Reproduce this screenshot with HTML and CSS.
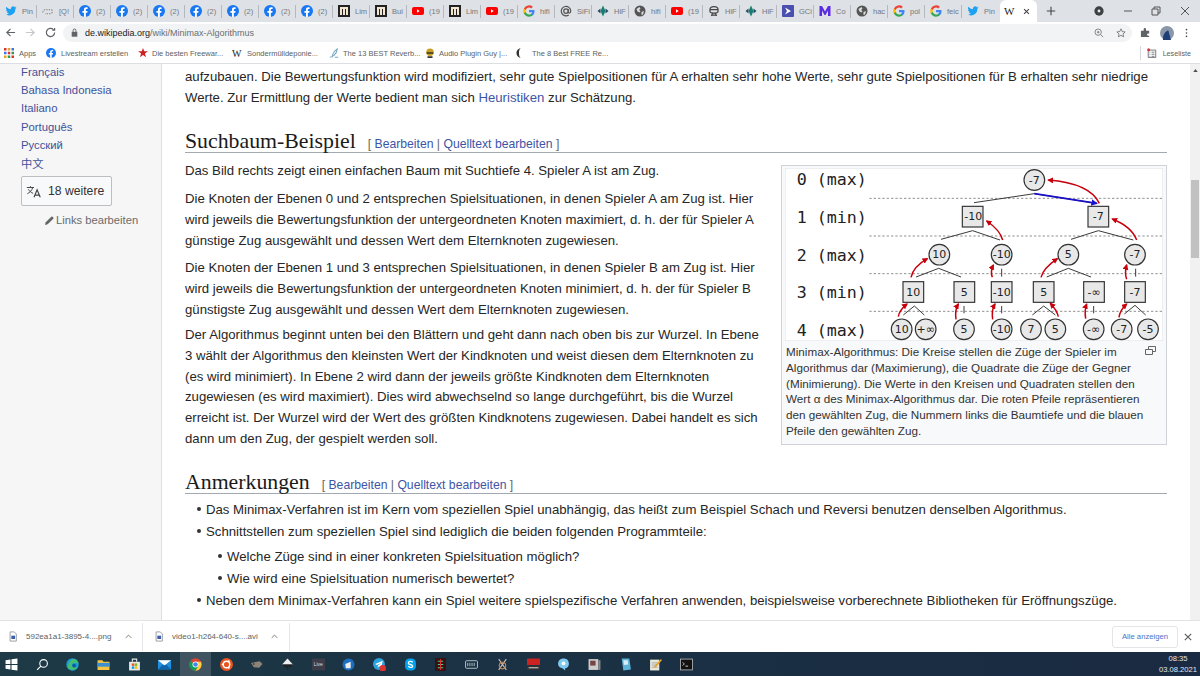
FILE: index.html
```html
<!DOCTYPE html>
<html lang="de">
<head>
<meta charset="utf-8">
<title>Minimax-Algorithmus</title>
<link rel="stylesheet" href="styles.css">
</head>
<body>
<svg class="defs" width="0" height="0">
  <symbol id="tw" viewBox="0 0 24 24"><path fill="#1da1f2" d="M23 5a9 9 0 0 1-2.6.7 4.500 4.500 0 0 0 2-2.500 9 9 0 0 1-2.900 1.100 4.500 4.500 0 0 0-7.700 4.100A12.800 12.800 0 0 1 2.500 3.700a4.500 4.500 0 0 0 1.400 6 4.500 4.500 0 0 1-2-.6 4.500 4.500 0 0 0 3.600 4.500 4.500 4.500 0 0 1-2 .1 4.500 4.500 0 0 0 4.200 3.100A9 9 0 0 1 1 18.700 12.800 12.800 0 0 0 20.700 7.300 9 9 0 0 0 23 5z"/></symbol>
  <symbol id="fb" viewBox="0 0 24 24"><circle cx="12" cy="12" r="12" fill="#1877f2"/><path fill="#fff" d="M16.500 15.500l.6-3.500h-3.400V9.700c0-1 .5-1.900 2-1.900h1.500v-3s-1.400-.2-2.700-.2c-2.800 0-4.600 1.700-4.600 4.700V12H6.800v3.500h3.100V24h3.800v-8.500z"/></symbol>
  <symbol id="li" viewBox="0 0 24 24"><rect width="24" height="24" fill="#222"/><path fill="#f2e6d0" d="M4 4h16v16h-4V8h-2v12h-4V8H8v12H4z"/></symbol>
  <symbol id="yt" viewBox="0 0 24 24"><rect y="4" width="24" height="16" rx="4" fill="#f00"/><path fill="#fff" d="M10 8.500l5.500 3.500-5.500 3.500z"/></symbol>
  <symbol id="gg" viewBox="0 0 24 24"><path fill="#4285f4" d="M23 12.300c0-.8-.1-1.600-.2-2.300H12v4.400h6.200a5.300 5.300 0 0 1-2.300 3.400v2.900h3.700c2.100-2 3.400-4.900 3.400-8.400z"/><path fill="#34a853" d="M12 23.500c3.100 0 5.700-1 7.600-2.800l-3.700-2.900c-1 .7-2.300 1.100-3.900 1.100-3 0-5.500-2-6.400-4.700H1.800v3A11.500 11.500 0 0 0 12 23.500z"/><path fill="#fbbc05" d="M5.600 14.200a6.900 6.900 0 0 1 0-4.400v-3H1.800a11.500 11.500 0 0 0 0 10.400z"/><path fill="#ea4335" d="M12 5.100c1.700 0 3.200.6 4.400 1.700l3.300-3.300A11.500 11.500 0 0 0 1.800 6.800l3.800 3C6.500 7.100 9 5.100 12 5.100z"/></symbol>
  <symbol id="at" viewBox="0 0 24 24"><circle cx="12" cy="12" r="4.500" fill="none" stroke="#555" stroke-width="2.500"/><path fill="none" stroke="#555" stroke-width="2.500" d="M16.500 8v6c0 3 5 3 5-2a9.500 9.500 0 1 0-4 8"/></symbol>
  <symbol id="di" viewBox="0 0 24 24"><path fill="#16806f" d="M12 1l5 11-5 11-5-11z"/><path fill="#2a4a66" d="M1 12l6-5v10zM23 12l-6-5v10z"/></symbol>
  <symbol id="gl" viewBox="0 0 24 24"><circle cx="12" cy="12" r="11" fill="#555"/><path fill="#ddd" d="M5 8l6-4 2 3-3 3 3 2-2 3-4-2zM15 14l5-2-2 7-3 1z"/></symbol>
  <symbol id="ro" viewBox="0 0 24 24"><path fill="none" stroke="#444" stroke-width="2.500" d="M4 9c0-8 16-8 16 0v4c0 3-3 3-8 3s-8 0-8-3zM4 9h16M7 20h10M9 16l-2 6M15 16l2 6"/></symbol>
  <symbol id="gc" viewBox="0 0 24 24"><rect width="24" height="24" rx="2" fill="#4a4fb0"/><path fill="#fff" d="M6 5l12 7-12 7 4-7z"/></symbol>
  <symbol id="mm" viewBox="0 0 24 24"><path fill="#5b2be0" d="M1 22V2h5l6 11 6-11h5v20h-5V11l-5 9h-2l-5-9v11z"/></symbol>
  <symbol id="cl" viewBox="0 0 24 24"><path fill="none" stroke="#999" stroke-width="2.500" stroke-dasharray="3 2" d="M2 15a5 5 0 0 1 5-6h10a4 4 0 0 1 0 8H6"/></symbol>
  <symbol id="fi" viewBox="0 0 24 24"><path fill="#fff" stroke="#8a9099" stroke-width="2" d="M5 1h10l5 5v17H5z"/><rect x="8" y="10" width="9" height="8" fill="#3b5fa8"/></symbol>
  <symbol id="win" viewBox="0 0 24 24"><path fill="#fff" d="M1 4l9-1.300V11H1zM12 2.400L23 1v10H12zM1 13h9v8.300L1 20zM12 13h11v10l-11-1.500z"/></symbol>
  <symbol id="sea" viewBox="0 0 24 24"><circle cx="14" cy="10" r="7" fill="none" stroke="#fff" stroke-width="2"/><path stroke="#fff" stroke-width="2" d="M9 15l-7 7"/></symbol>
  <symbol id="edge" viewBox="0 0 24 24"><circle cx="12" cy="12" r="11.500" fill="#1a9bd7"/><path fill="#4fc94f" d="M3 17c4 6 13 8 19-1-5 3-11 2-11-3 0-4 6-6 12-2 0-3-2-8-8-9C10 2 4 8 3 17z" opacity=".75"/><circle cx="15" cy="14" r="3.500" fill="#0f5a9c"/></symbol>
  <symbol id="fol" viewBox="0 0 24 24"><path fill="#f5c542" d="M1 4h9l2 3h11v15H1z"/><rect x="1" y="9" width="22" height="7" fill="#3a8fd0"/></symbol>
  <symbol id="sto" viewBox="0 0 24 24"><path fill="#e8e8e8" d="M2 7h20v16H2z"/><path fill="none" stroke="#e8e8e8" stroke-width="2" d="M8 7V2h8v5"/><rect x="7" y="10" width="4.500" height="4.500" fill="#f25022"/><rect x="12.500" y="10" width="4.500" height="4.500" fill="#7fba00"/><rect x="7" y="15.500" width="4.500" height="4.500" fill="#00a4ef"/><rect x="12.500" y="15.500" width="4.500" height="4.500" fill="#ffb900"/></symbol>
  <symbol id="mai" viewBox="0 0 24 24"><rect y="4" width="24" height="17" fill="#1f8fdc"/><path fill="#fff" d="M0 4h24L12 14z"/><path fill="#0f65ad" d="M0 21l9-9 3 2 3-2 9 9z"/></symbol>
  <symbol id="chr" viewBox="0 0 24 24"><circle cx="12" cy="12" r="11.500" fill="#db4437"/><path fill="#0f9d58" d="M12 12L2 6v0A11.500 11.500 0 0 0 12 23.500l5-8z"/><path fill="#ffcd40" d="M12 7h10a11.500 11.500 0 0 1-10 16.500l5-8z"/><circle cx="12" cy="12" r="5.500" fill="#fff"/><circle cx="12" cy="12" r="4.200" fill="#4285f4"/></symbol>
  <symbol id="ubu" viewBox="0 0 24 24"><circle cx="12" cy="12" r="12" fill="#e95420"/><circle cx="12" cy="12" r="6" fill="none" stroke="#fff" stroke-width="2.500"/><circle cx="5" cy="12" r="2" fill="#fff"/><circle cx="16" cy="6" r="2" fill="#fff"/><circle cx="16" cy="18" r="2" fill="#fff"/></symbol>
  <symbol id="mol" viewBox="0 0 24 24"><path fill="#8c8478" d="M2 9l16-3 5 5-6 7-10-1z"/><circle cx="7" cy="11" r="1.500" fill="#222"/></symbol>
  <symbol id="ink" viewBox="0 0 24 24"><path fill="#eee" d="M12 1l10 11H2z"/><path fill="#222" d="M2 12h20l-6 6-2-2-2 6-2-6-2 2z"/></symbol>
  <symbol id="liv" viewBox="0 0 24 24"><rect y="1" width="24" height="22" fill="#3c3c4a"/></symbol>
  <symbol id="blu" viewBox="0 0 24 24"><circle cx="12" cy="12" r="11" fill="#1b6fc2"/><path fill="#eee" d="M6 11l10-4v12H7z"/></symbol>
  <symbol id="tel" viewBox="0 0 24 24"><circle cx="11" cy="11" r="11" fill="#2aa3de"/><path fill="#fff" d="M4 11l14-6-3 13-4-3-2 3v-4l6-5-8 4z"/><circle cx="18" cy="19" r="6" fill="#d33"/></symbol>
  <symbol id="sky" viewBox="0 0 24 24"><rect x="2" y="1" width="20" height="22" rx="8" fill="#00a2ed"/><path fill="none" stroke="#fff" stroke-width="2.500" d="M16 8c-2-3-8-2-8 1 0 4 8 2 8 6 0 3-6 3-8 0"/></symbol>
  <symbol id="mat" viewBox="0 0 24 24"><rect x="2" width="20" height="24" fill="#3a1010"/><path stroke="#2d9" stroke-width="2" d="M7 6h10M7 12h10M7 18h10"/><path stroke="#d33" stroke-width="2" d="M12 2v20"/></symbol>
  <symbol id="kal" viewBox="0 0 24 24"><rect x="1" y="5" width="22" height="14" rx="2" fill="none" stroke="#cdd" stroke-width="1.500"/><path stroke="#cdd" stroke-width="1.500" d="M5 9v6M9 9v6M13 9v6M17 9v6"/></symbol>
  <symbol id="xx" viewBox="0 0 24 24"><path stroke="#cbb" stroke-width="2" fill="none" d="M5 2l14 20M19 2L5 22"/><circle cx="12" cy="14" r="6" fill="none" stroke="#b85" stroke-width="2"/></symbol>
  <symbol id="voi" viewBox="0 0 24 24"><rect y="1" width="24" height="12" fill="#c22"/><rect y="14" width="24" height="8" fill="#333"/><path stroke="#ccc" stroke-width="2" d="M3 18h18"/></symbol>
  <symbol id="pus" viewBox="0 0 24 24"><path fill="#7fc8ee" d="M12 1c7 0 10 4 10 10 0 5-4 8-7 8v4l-5-4c-5-1-8-4-8-8C2 5 6 1 12 1z"/><circle cx="12" cy="10" r="3.500" fill="#fff"/></symbol>
  <symbol id="boo" viewBox="0 0 24 24"><rect x="1" y="2" width="18" height="20" fill="#ccc"/><rect x="4" y="5" width="10" height="9" fill="#744"/><rect x="19" y="4" width="4" height="18" fill="#888"/></symbol>
  <symbol id="nbk" viewBox="0 0 24 24"><path fill="#5fb2d8" d="M5 1h14l3 20-14 2z"/><path fill="#d7eef8" d="M8 4h8l1 8-8 1z"/></symbol>
  <symbol id="npd" viewBox="0 0 24 24"><rect x="2" y="3" width="17" height="20" fill="#e8e8d8"/><path stroke="#99a" stroke-width="1.500" d="M5 9h11M5 13h11M5 17h11"/><path fill="#e8a020" d="M22 2l2 2-11 12-4 2 2-4z"/></symbol>
  <symbol id="trm" viewBox="0 0 24 24"><rect x="1" y="2" width="22" height="20" fill="#111" stroke="#bbb" stroke-width="1.500"/><path stroke="#eee" stroke-width="1.500" fill="none" d="M5 8l3 3-3 3M10 15h5"/></symbol>
</svg>

<div class="screen">
  <div class="tabs">
    <div class="tab"><svg class="tab-ic"><use href="#tw"/></svg><span>Pin</span></div>
    <div class="tab"><svg class="tab-ic"><use href="#cl"/></svg><span>[Q!</span></div>
    <div class="tab"><svg class="tab-ic"><use href="#fb"/></svg><span>(2)</span></div>
    <div class="tab"><svg class="tab-ic"><use href="#fb"/></svg><span>(2)</span></div>
    <div class="tab"><svg class="tab-ic"><use href="#fb"/></svg><span>(2)</span></div>
    <div class="tab"><svg class="tab-ic"><use href="#fb"/></svg><span>(2)</span></div>
    <div class="tab"><svg class="tab-ic"><use href="#fb"/></svg><span>(2)</span></div>
    <div class="tab"><svg class="tab-ic"><use href="#fb"/></svg><span>(2)</span></div>
    <div class="tab"><svg class="tab-ic"><use href="#fb"/></svg><span>(2)</span></div>
    <div class="tab"><svg class="tab-ic"><use href="#li"/></svg><span>Lim</span></div>
    <div class="tab"><svg class="tab-ic"><use href="#li"/></svg><span>Bui</span></div>
    <div class="tab"><svg class="tab-ic"><use href="#yt"/></svg><span>(19</span></div>
    <div class="tab"><svg class="tab-ic"><use href="#li"/></svg><span>Lim</span></div>
    <div class="tab"><svg class="tab-ic"><use href="#yt"/></svg><span>(19</span></div>
    <div class="tab"><svg class="tab-ic"><use href="#gg"/></svg><span>hifi</span></div>
    <div class="tab"><svg class="tab-ic"><use href="#at"/></svg><span>SiFi</span></div>
    <div class="tab"><svg class="tab-ic"><use href="#di"/></svg><span>HiF</span></div>
    <div class="tab"><svg class="tab-ic"><use href="#gl"/></svg><span>hifi</span></div>
    <div class="tab"><svg class="tab-ic"><use href="#yt"/></svg><span>(19</span></div>
    <div class="tab"><svg class="tab-ic"><use href="#ro"/></svg><span>HiF</span></div>
    <div class="tab"><svg class="tab-ic"><use href="#di"/></svg><span>HiF</span></div>
    <div class="tab"><svg class="tab-ic"><use href="#gc"/></svg><span>GCi</span></div>
    <div class="tab"><svg class="tab-ic"><use href="#mm"/></svg><span>Co</span></div>
    <div class="tab"><svg class="tab-ic"><use href="#gl"/></svg><span>hac</span></div>
    <div class="tab"><svg class="tab-ic"><use href="#gg"/></svg><span>pol</span></div>
    <div class="tab"><svg class="tab-ic"><use href="#gg"/></svg><span>feic</span></div>
    <div class="tab tab-last"><svg class="tab-ic"><use href="#tw"/></svg><span>Pin</span></div>
    <div class="tab-active"><span class="w-logo">W</span><svg class="tab-x" viewBox="0 0 10 10"><path d="M1.500 1.500l7 7M8.500 1.500l-7 7"/></svg></div>
    <svg class="new-tab" viewBox="0 0 12 12"><path d="M6 1v10M1 6h10"/></svg>
    <div class="win-controls">
      <svg class="rec" viewBox="0 0 14 14"><circle cx="7" cy="7" r="6.500" fill="#3c4043"/><circle cx="7" cy="7" r="2" fill="#e8e8e8"/></svg>
      <svg class="wc wc-min" viewBox="0 0 10 10"><path d="M1 5h8"/></svg>
      <svg class="wc wc-max" viewBox="0 0 10 10"><path d="M1 3h6v6H1zM3 3V1h6v6H7"/></svg>
      <svg class="wc wc-close" viewBox="0 0 10 10"><path d="M1 1l8 8M9 1l-8 8"/></svg>
    </div>
  </div>

  <div class="toolbar">
    <svg class="nav" viewBox="0 0 12 12"><path d="M11 6H2M6 2L2 6l4 4"/></svg>
    <svg class="nav nav-off" viewBox="0 0 12 12"><path d="M1 6h9M6 2l4 4-4 4"/></svg>
    <svg class="nav" viewBox="0 0 12 12"><path d="M10.500 6a4.500 4.500 0 1 1-1.300-3.200M10.500 1v2.500H8"/></svg>
    <div class="omnibox">
      <svg class="lock" viewBox="0 0 10 12"><path fill="#5f6368" d="M1 5h8v7H1z"/><path fill="none" stroke="#5f6368" stroke-width="1.400" d="M3 5V3a2 2 0 0 1 4 0v2"/></svg>
      <span class="url"><b>de.wikipedia.org</b>/wiki/Minimax-Algorithmus</span>
      <svg class="omni-ic omni-zoom" viewBox="0 0 12 12"><circle cx="5" cy="5" r="3.800"/><path d="M8 8l3 3M3.500 5h3M5 3.500v3"/></svg>
      <svg class="omni-ic omni-star" viewBox="0 0 12 12"><path d="M6 1l1.500 3.300 3.500.4-2.600 2.400.7 3.500L6 8.800l-3.100 1.800.7-3.500L1 4.700l3.500-.4z"/></svg>
    </div>
    <svg class="ext" viewBox="0 0 12 12"><path fill="#5f6368" d="M1 4h3V2.500a1.300 1.300 0 0 1 2.600 0V4H10v3h-1a1.300 1.300 0 0 0 0 2.600h1V11H1z"/></svg>
    <svg class="avatar" viewBox="0 0 14 14"><circle cx="7" cy="7" r="7" fill="#8a97a8"/><path fill="#1f3f78" d="M3 14c0-5 1-7 4-9 1-1 2 0 2 2l2 7z"/></svg>
    <svg class="menu-dots" viewBox="0 0 4 12"><circle cx="2" cy="1.500" r="1.100"/><circle cx="2" cy="6" r="1.100"/><circle cx="2" cy="10.500" r="1.100"/></svg>
  </div>

  <div class="bookmarks">
    <div class="bm bm-apps"><svg class="bm-ic" viewBox="0 0 12 12"><g fill="#d33"><rect x="0" y="0" width="3" height="3"/><rect x="4.500" y="0" width="3" height="3" fill="#e8a020"/><rect x="9" y="0" width="3" height="3" fill="#3b78e7"/><rect x="0" y="4.500" width="3" height="3" fill="#3b78e7"/><rect x="4.500" y="4.500" width="3" height="3"/><rect x="9" y="4.500" width="3" height="3" fill="#2a9d50"/><rect x="0" y="9" width="3" height="3" fill="#e8a020"/><rect x="4.500" y="9" width="3" height="3" fill="#2a9d50"/><rect x="9" y="9" width="3" height="3"/></g></svg><span>Apps</span></div>
    <div class="bm bm-live"><svg class="bm-ic"><use href="#fb"/></svg><span>Livestream erstellen</span></div>
    <div class="bm bm-free"><svg class="bm-ic" viewBox="0 0 12 12"><path fill="#c22" d="M6 0l1.500 4H12L8.300 6.600 9.700 11 6 8.300 2.300 11l1.400-4.400L0 4h4.500z"/></svg><span>Die besten Freewar...</span></div>
    <div class="bm bm-sond"><span class="bm-w">W</span><span>Sondermülldeponie...</span></div>
    <div class="bm bm-rev"><svg class="bm-ic" viewBox="0 0 12 12"><path fill="none" stroke="#7aa8c8" stroke-width="1.300" d="M1 11c3 0 8-3 9-10-3 2-6 5-6 10M7 11h4"/></svg><span>The 13 BEST Reverb...</span></div>
    <div class="bm bm-plug"><svg class="bm-ic" viewBox="0 0 12 12"><circle cx="6" cy="5" r="4.500" fill="#c9a020"/><path fill="#333" d="M2 5h8v2H2zM3 10h6v2H3z"/></svg><span>Audio Plugin Guy |...</span></div>
    <div class="bm bm-best"><svg class="bm-ic" viewBox="0 0 12 12"><path fill="#333" d="M8 0C4 1 3 4 3 6s1 5 5 6c-2-2-2-4-2-6s0-4 2-6z"/></svg><span>The 8 Best FREE Re...</span></div>
    <div class="leseliste"><svg class="bm-ic" viewBox="0 0 12 12"><path fill="none" stroke="#5f6368" d="M1.500 2.500h9v9h-9zM3 5h1M5.500 5H9M3 7.500h1M5.500 7.500H9M3 10h1M5.500 10H9"/><circle cx="2" cy="2" r="1.800" fill="#d33"/></svg><span>Leseliste</span></div>
  </div>

  <div class="page">
    <nav class="sidebar">
      <a class="lang">Français</a>
      <a class="lang">Bahasa Indonesia</a>
      <a class="lang">Italiano</a>
      <a class="lang">Português</a>
      <a class="lang">Русский</a>
      <a class="lang lang-cjk">中文</a>
      <div class="more-langs">
        <svg class="translate" viewBox="0 0 18 14"><path fill="none" stroke="#444" stroke-width="1.100" d="M1 2.500h8M5 1v1.500M7.500 2.500C7 5.500 4.500 8 1.500 9.500M2.800 4.500C4 7 6 8.500 8 9"/><path fill="none" stroke="#444" stroke-width="1.300" d="M9 13.500L12.500 5l3.500 8.500M10.200 11h4.600"/></svg>
        <span>18 weitere</span>
      </div>
      <div class="edit-links">
        <svg class="pencil" viewBox="0 0 10 10"><path fill="#666" d="M0 10l.8-3L7 .8a1 1 0 0 1 1.400 0l.8.8a1 1 0 0 1 0 1.400L3 9.200z"/></svg>
        <span>Links bearbeiten</span>
      </div>
    </nav>
    <main class="content">
      <p class="intro">aufzubauen. Die Bewertungsfunktion wird modifiziert, sehr gute Spielpositionen für A erhalten sehr hohe Werte, sehr gute Spielpositionen für B erhalten sehr niedrige Werte. Zur Ermittlung der Werte bedient man sich <a>Heuristiken</a> zur Schätzung.</p>
      <h2 class="h2-first">Suchbaum-Beispiel<span class="editsec">[ <a>Bearbeiten</a> | <a>Quelltext bearbeiten</a> ]</span></h2>
      <figure class="thumb">
        <svg class="tree" viewBox="15 24 1134 519" width="378" height="173">
          <defs>
            <marker id="ar" viewBox="0 0 10 10" refX="8" refY="5" markerWidth="4" markerHeight="4" markerUnits="strokeWidth" orient="auto"><path d="M0 0l10 5-10 5z" fill="#c8000c"/></marker>
            <marker id="ab" viewBox="0 0 10 10" refX="8" refY="5" markerWidth="4" markerHeight="4" markerUnits="strokeWidth" orient="auto"><path d="M0 0l10 5-10 5z" fill="#1a10c8"/></marker>
          </defs>
          <rect class="frame" x="15" y="24" width="1134" height="519"/>
          <g class="dash"><path d="M268 115H1149M268 228H1149M268 341H1149M268 454H1149"/></g>
          <g class="lv">
            <text x="50" y="76">0 (max)</text><text x="50" y="189">1 (min)</text><text x="50" y="302">2 (max)</text><text x="50" y="415">3 (min)</text><text x="50" y="528">4 (max)</text>
          </g>
          <g class="edge">
            <path d="M763 101L582 128M763 101L950 130M578 212L483 238M578 212L660 240M955 212L873 238M955 212L1060 240M476 325L408 351M476 325L543 351M665 326V350M865 325L800 351M865 325L933 351M1067 326V350M403 438L370 465M403 438L433 465M552 438V460M665 438V460M791 438L757 465M791 438L826 465M941 438V460M1065 436L1033 462M1065 436L1097 465"/>
          </g>
          <path class="blue" d="M763 101L950 130" marker-end="url(#ab)"/>
          <g class="nodes">
            <circle cx="763" cy="60" r="31"/>
            <rect x="547" y="139" width="62" height="62"/><rect x="924" y="139" width="62" height="62"/>
            <circle cx="478" cy="284" r="31"/><circle cx="665" cy="284" r="31"/><circle cx="865" cy="284" r="31"/><circle cx="1065" cy="284" r="31"/>
            <rect x="369" y="365" width="62" height="62"/><rect x="522" y="365" width="62" height="62"/><rect x="634" y="365" width="62" height="62"/><rect x="760" y="365" width="62" height="62"/><rect x="911" y="365" width="62" height="62"/><rect x="1034" y="365" width="62" height="62"/>
            <circle cx="365" cy="508" r="31"/><circle cx="437" cy="508" r="31"/><circle cx="552" cy="508" r="31"/><circle cx="665" cy="508" r="31"/><circle cx="753" cy="508" r="31"/><circle cx="826" cy="508" r="31"/><circle cx="941" cy="508" r="31"/><circle cx="1025" cy="508" r="31"/><circle cx="1104" cy="508" r="31"/>
          </g>
          <g class="val">
            <text x="763" y="71">-7</text>
            <text x="580" y="181">-10</text><text x="955" y="181">-7</text>
            <text x="478" y="295">10</text><text x="665" y="295">-10</text><text x="865" y="295">5</text><text x="1065" y="295">-7</text>
            <text x="400" y="407">10</text><text x="553" y="407">5</text><text x="665" y="407">-10</text><text x="791" y="407">5</text><text x="942" y="407">-∞</text><text x="1065" y="407">-7</text>
            <text x="365" y="519">10</text><text x="437" y="519">+∞</text><text x="552" y="519">5</text><text x="665" y="519">-10</text><text x="753" y="519">7</text><text x="826" y="519">5</text><text x="941" y="519">-∞</text><text x="1025" y="519">-7</text><text x="1104" y="519">-5</text>
          </g>
          <g class="red">
            <path marker-end="url(#ar)" d="M958 130Q930 70 805 60"/>
            <path marker-end="url(#ar)" d="M1070 240Q1055 200 997 177"/>
            <path marker-end="url(#ar)" d="M668 240Q660 210 620 183"/>
            <path marker-end="url(#ar)" d="M393 352Q400 320 442 296"/>
            <path marker-end="url(#ar)" d="M637 352Q630 335 640 315"/>
            <path marker-end="url(#ar)" d="M783 352Q790 325 832 296"/>
            <path marker-end="url(#ar)" d="M1040 358Q1033 340 1040 315"/>
            <path marker-end="url(#ar)" d="M355 470Q358 450 381 432"/>
            <path marker-end="url(#ar)" d="M528 478Q524 450 535 432"/>
            <path marker-end="url(#ar)" d="M638 478Q634 450 645 432"/>
            <path marker-end="url(#ar)" d="M835 470Q830 450 811 430"/>
            <path marker-end="url(#ar)" d="M917 476Q913 450 920 432"/>
            <path marker-end="url(#ar)" d="M1017 472Q1020 450 1040 432"/>
          </g>
        </svg>
        <figcaption>
          <svg class="magnify" viewBox="0 0 11 9"><path fill="none" stroke="#666" d="M3.500 3.500V.5h7v5h-3M.5 3.500h7v5h-7z"/></svg>
          Minimax-Algorithmus: Die Kreise stellen die Züge der Spieler im Algorithmus dar (Maximierung), die Quadrate die Züge der Gegner (Minimierung). Die Werte in den Kreisen und Quadraten stellen den Wert α des Minimax-Algorithmus dar. Die roten Pfeile repräsentieren den gewählten Zug, die Nummern links die Baumtiefe und die blauen Pfeile den gewählten Zug.
        </figcaption>
      </figure>
      <p>Das Bild rechts zeigt einen einfachen Baum mit Suchtiefe 4. Spieler A ist am Zug.</p>
      <p>Die Knoten der Ebenen 0 und 2 entsprechen Spielsituationen, in denen Spieler A am Zug ist. Hier wird jeweils die Bewertungsfunktion der untergeordneten Knoten maximiert, d. h. der für Spieler A günstige Zug ausgewählt und dessen Wert dem Elternknoten zugewiesen.</p>
      <p class="p-tight">Die Knoten der Ebenen 1 und 3 entsprechen Spielsituationen, in denen Spieler B am Zug ist. Hier wird jeweils die Bewertungsfunktion der untergeordneten Knoten minimiert, d. h. der für Spieler B günstigste Zug ausgewählt und dessen Wert dem Elternknoten zugewiesen.</p>
      <p>Der Algorithmus beginnt unten bei den Blättern und geht dann nach oben bis zur Wurzel. In Ebene 3 wählt der Algorithmus den kleinsten Wert der Kindknoten und weist diesen dem Elternknoten zu (es wird minimiert). In Ebene 2 wird dann der jeweils größte Kindknoten dem Elternknoten zugewiesen (es wird maximiert). Dies wird abwechselnd so lange durchgeführt, bis die Wurzel erreicht ist. Der Wurzel wird der Wert des größten Kindknotens zugewiesen. Dabei handelt es sich dann um den Zug, der gespielt werden soll.</p>
      <h2>Anmerkungen<span class="editsec">[ <a>Bearbeiten</a> | <a>Quelltext bearbeiten</a> ]</span></h2>
      <ul>
        <li>Das Minimax-Verfahren ist im Kern vom speziellen Spiel unabhängig, das heißt zum Beispiel Schach und Reversi benutzen denselben Algorithmus.</li>
        <li>Schnittstellen zum speziellen Spiel sind lediglich die beiden folgenden Programmteile:
          <ul>
            <li>Welche Züge sind in einer konkreten Spielsituation möglich?</li>
            <li>Wie wird eine Spielsituation numerisch bewertet?</li>
          </ul>
        </li>
        <li>Neben dem Minimax-Verfahren kann ein Spiel weitere spielspezifische Verfahren anwenden, beispielsweise vorberechnete Bibliotheken für Eröffnungszüge.</li>
      </ul>
    </main>
    <div class="scrollbar">
      <svg class="sb-arrow" viewBox="0 0 6 4"><path d="M3 0l3 4H0z" fill="#505050"/></svg>
      <div class="sb-thumb"></div>
    </div>
  </div>

  <div class="downloads">
    <div class="dl"><svg class="dl-ic"><use href="#fi"/></svg><span class="dl-name">592ea1a1-3895-4....png</span><svg class="chev" viewBox="0 0 10 6"><path d="M1 5l4-4 4 4"/></svg></div>
    <div class="dl"><svg class="dl-ic"><use href="#fi"/></svg><span class="dl-name">video1-h264-640-s....avi</span><svg class="chev" viewBox="0 0 10 6"><path d="M1 5l4-4 4 4"/></svg></div>
    <div class="dl-right">
      <div class="show-all">Alle anzeigen</div>
      <svg class="dl-close" viewBox="0 0 10 10"><path d="M1 1l8 8M9 1l-8 8"/></svg>
    </div>
  </div>

  <div class="taskbar">
    <div class="tb"><svg><use href="#win"/></svg></div>
    <div class="tb"><svg><use href="#sea"/></svg></div>
    <div class="tb"><svg><use href="#edge"/></svg></div>
    <div class="tb"><svg><use href="#fol"/></svg></div>
    <div class="tb"><svg><use href="#sto"/></svg></div>
    <div class="tb"><svg><use href="#mai"/></svg></div>
    <div class="tb tb-on"><svg><use href="#chr"/></svg></div>
    <div class="tb"><svg><use href="#ubu"/></svg></div>
    <div class="tb"><svg><use href="#mol"/></svg></div>
    <div class="tb"><svg><use href="#ink"/></svg></div>
    <div class="tb tb-live"><svg><use href="#liv"/></svg><span>Live</span></div>
    <div class="tb"><svg><use href="#blu"/></svg></div>
    <div class="tb"><svg><use href="#tel"/></svg></div>
    <div class="tb"><svg><use href="#sky"/></svg></div>
    <div class="tb"><svg><use href="#mat"/></svg></div>
    <div class="tb"><svg><use href="#kal"/></svg></div>
    <div class="tb"><svg><use href="#xx"/></svg></div>
    <div class="tb"><svg><use href="#voi"/></svg></div>
    <div class="tb"><svg><use href="#pus"/></svg></div>
    <div class="tb"><svg><use href="#boo"/></svg></div>
    <div class="tb"><svg><use href="#nbk"/></svg></div>
    <div class="tb"><svg><use href="#npd"/></svg></div>
    <div class="tb"><svg><use href="#trm"/></svg></div>
    <div class="clock"><span>08:35</span><span>03.08.2021</span></div>
  </div>
</div>
</body>
</html>
```
FILE: styles.css
```css
* { box-sizing: border-box; }
html, body { margin: 0; padding: 0; height: 100%; overflow: hidden; }
body { font-family: "Liberation Sans", Arial, sans-serif; color: #2b2b2b; background: #fff; }
.defs { position: absolute; }
.screen { width: 1200px; height: 676px; display: flex; flex-direction: column; overflow: hidden; }

/* tab strip */
.tabs { height: 22px; flex: none; background: #dee1e6; display: flex; align-items: center; }
.tab { width: 37px; height: 13px; flex: none; display: flex; align-items: center; gap: 5px; padding-left: 5px; border-right: 1px solid #b5b8bd; font-size: 7.500px; color: #74777c; overflow: hidden; white-space: nowrap; }
.tab-last { border-right: 0; }
.tab-ic { width: 12px; height: 12px; flex: none; }
.tab-active { width: 37px; height: 22px; margin-left: 1px; flex: none; background: #fff; border-radius: 6px 6px 0 0; display: flex; align-items: center; padding-left: 4px; gap: 8px; }
.w-logo { font-family: "Liberation Serif", serif; font-size: 11px; color: #222; width: 11px; }
.tab-x { width: 7px; height: 7px; fill: none; stroke: #444; stroke-width: 1.500; }
.new-tab { width: 10px; height: 10px; margin-left: 9px; fill: none; stroke: #444; stroke-width: 1.300; flex: none; }
.win-controls { margin-left: auto; display: flex; align-items: center; padding-right: 10px; }
.rec { width: 10px; height: 10px; margin-right: 19px; }
.wc { width: 10px; height: 10px; fill: none; stroke: #555; stroke-width: 1; }
.wc-min { margin-right: 18px; }
.wc-max { margin-right: 19px; }

/* toolbar */
.toolbar { height: 21px; flex: none; background: #fff; display: flex; align-items: center; padding-left: 5px; }
.nav { width: 11px; height: 11px; margin-right: 9px; fill: none; stroke: #5f6368; stroke-width: 1.300; flex: none; }
.nav-off { stroke: #c4c7cb; }
.omnibox { width: 1069px; height: 18px; margin-left: -2px; border-radius: 9px; background: #f1f3f4; display: flex; align-items: center; padding-left: 8px; flex: none; }
.lock { width: 7px; height: 9px; flex: none; }
.url { margin-left: 7px; font-size: 9px; color: #6b6e72; white-space: nowrap; }
.url b { font-weight: 400; color: #222; }
.omni-ic { width: 10px; height: 10px; fill: none; stroke: #5f6368; stroke-width: .9; flex: none; }
.omni-zoom { margin-left: auto; }
.omni-star { margin-left: 12px; margin-right: 6px; }
.ext { width: 11px; height: 11px; margin-left: 8px; flex: none; }
.avatar { width: 14px; height: 14px; margin-left: 9px; flex: none; }
.menu-dots { width: 3px; height: 10px; margin-left: 11px; fill: #444; flex: none; }

/* bookmarks */
.bookmarks { height: 21px; flex: none; background: #fff; border-bottom: 1px solid #dcdee1; display: flex; align-items: center; padding-left: 4px; font-size: 7.500px; color: #5c5f63; white-space: nowrap; }
.bm { display: flex; align-items: center; flex: none; }
.bm-ic { width: 10px; height: 10px; flex: none; }
.bm-apps { width: 42px; gap: 5px; }
.bm-live { width: 92px; gap: 5px; }
.bm-free { width: 94px; gap: 4px; }
.bm-sond { width: 97px; gap: 5px; }
.bm-rev { width: 96px; gap: 4px; }
.bm-plug { width: 89px; gap: 4px; }
.bm-best { gap: 8px; }
.bm-w { font-family: "Liberation Serif", serif; font-size: 10px; color: #222; width: 10px; }
.leseliste { margin-left: auto; padding-right: 9px; padding-left: 6px; height: 14px; border-left: 1px solid #d5d7da; display: flex; align-items: center; gap: 6px; font-size: 7.200px; }

/* page */
.page { flex: 1; min-height: 0; display: flex; overflow: hidden; background: #fff; }
.sidebar { width: 162px; flex: none; background: #f6f6f6; border-right: 1px solid #cfe3f3; padding: 0 0 0 21px; font-size: 11.300px; display: flex; flex-direction: column; align-items: flex-start; }
.lang { color: #40529a; height: 18.200px; line-height: 18.200px; white-space: nowrap; }
.lang:first-child { margin-top: -1px; }
.lang-cjk { font-family: "Noto Sans CJK SC", sans-serif; }
.more-langs { margin-top: 4px; width: 91px; height: 30px; border: 1px solid #bcbec2; border-radius: 2px; background: #f8f9fa; display: flex; align-items: center; padding-left: 4px; gap: 6px; font-size: 12.200px; color: #333; }
.translate { width: 16px; height: 13px; flex: none; }
.edit-links { margin: 8px 0 0 24px; display: flex; align-items: center; gap: 2px; font-size: 11.200px; color: #6b6b6b; white-space: nowrap; }
.pencil { width: 9px; height: 9px; flex: none; }

.content { flex: 1; min-width: 0; padding: 3px 23px 0 23px; font-size: 13.200px; line-height: 20.700px; color: #262626; }
.content a { color: #3d55a5; }
.content p { margin: 0 0 7px; }
.content .intro { margin-bottom: 0; }
.content .p-tight { margin-bottom: 5px; }
h2 { height: 26px; margin: 18px 0 6px; padding-top: 2px; font-family: "Liberation Serif", serif; font-weight: 400; font-size: 21.800px; line-height: 25px; color: #1a1a1a; border-bottom: 1px solid #a2a9b1; white-space: nowrap; }
.h2-first { margin-top: 19px; margin-bottom: 8px; }
.editsec { margin-left: 12px; font-family: "Liberation Sans", sans-serif; font-size: 12.200px; color: #666; vertical-align: baseline; }

.thumb { float: right; width: 386px; margin: 3.500px 0 8px 20px; padding: 2px 3px 5px; background: #f8f9fa; border: 1px solid #cfd2d6; }
.tree { display: block; }
.frame { fill: #fff; stroke: #dcdfe3; stroke-width: 3; }
.dash path { stroke: #7a7a7a; stroke-width: 2.500; stroke-dasharray: 7 6; fill: none; }
.lv text { font-family: "DejaVu Sans Mono", monospace; font-size: 50px; fill: #222; }
.edge path { stroke: #3a3a3a; stroke-width: 3; fill: none; }
.blue { stroke: #1a10c8; stroke-width: 5; fill: none; }
.nodes circle, .nodes rect { fill: #e8e8e8; stroke: #333; stroke-width: 3.500; }
.val text { font-family: "DejaVu Sans", sans-serif; font-size: 33px; fill: #222; text-anchor: middle; }
.red path { stroke: #c8000c; stroke-width: 4.500; fill: none; }
figcaption { font-size: 11.700px; line-height: 15.800px; color: #333; padding: 3px 1px 0; }
.magnify { float: right; width: 11px; height: 9px; margin: 2px 6px 0 8px; }

.content ul { margin: 0; padding-left: 21px; list-style: none; }
.content li { margin-bottom: 1.300px; }
.content li::before { content: ""; display: inline-block; width: 4px; height: 4px; margin: 0 5px 2px -9px; border-radius: 50%; background: #333; vertical-align: middle; }
.content li ul { margin-top: 4.500px; }

.scrollbar { width: 10px; flex: none; background: #f1f1f1; display: flex; flex-direction: column; align-items: center; padding-top: 5px; }
.sb-arrow { width: 5px; height: 3px; flex: none; }
.sb-thumb { width: 8px; height: 78px; margin-top: 108px; background: #c1c1c1; flex: none; }

/* downloads */
.downloads { height: 32px; flex: none; background: #fff; border-top: 1px solid #e0e2e5; display: flex; align-items: center; font-size: 8px; color: #5c5f63; white-space: nowrap; }
.dl { height: 28px; display: flex; align-items: center; padding-left: 8px; border-right: 1px solid #e3e5e8; width: 143px; flex: none; }
.dl + .dl { width: 147px; padding-left: 11px; }
.dl-ic { width: 10px; height: 11px; flex: none; }
.dl-name { margin-left: 8px; width: 88px; }
.chev { width: 7px; height: 5px; margin-left: 11px; fill: none; stroke: #666; stroke-width: 1.200; flex: none; }
.dl-right { margin-left: auto; display: flex; align-items: center; padding-right: 8px; }
.show-all { width: 66px; height: 22px; border: 1px solid #e3e5e8; border-radius: 3px; display: flex; align-items: center; justify-content: center; color: #4a72c8; font-size: 7.700px; }
.dl-close { width: 8px; height: 8px; margin-left: 6px; fill: none; stroke: #555; stroke-width: 1.300; }

/* taskbar */
.taskbar { height: 24px; flex: none; display: flex; align-items: center; background: linear-gradient(90deg, #1d3a46 0%, #1b3244 40%, #1a2a42 100%); }
.tb { width: 30.700px; height: 24px; flex: none; display: flex; align-items: center; justify-content: center; position: relative; }
.tb:first-child { margin-left: -4px; }
.tb svg { width: 13px; height: 13px; }
.tb-on { background: #3f5360; }
.tb-live span { position: absolute; font-size: 5px; color: #ddd; }
.clock { margin-left: auto; padding-right: 3px; display: flex; flex-direction: column; align-items: center; font-size: 7.600px; line-height: 11.500px; color: #e4e8ee; }
```
